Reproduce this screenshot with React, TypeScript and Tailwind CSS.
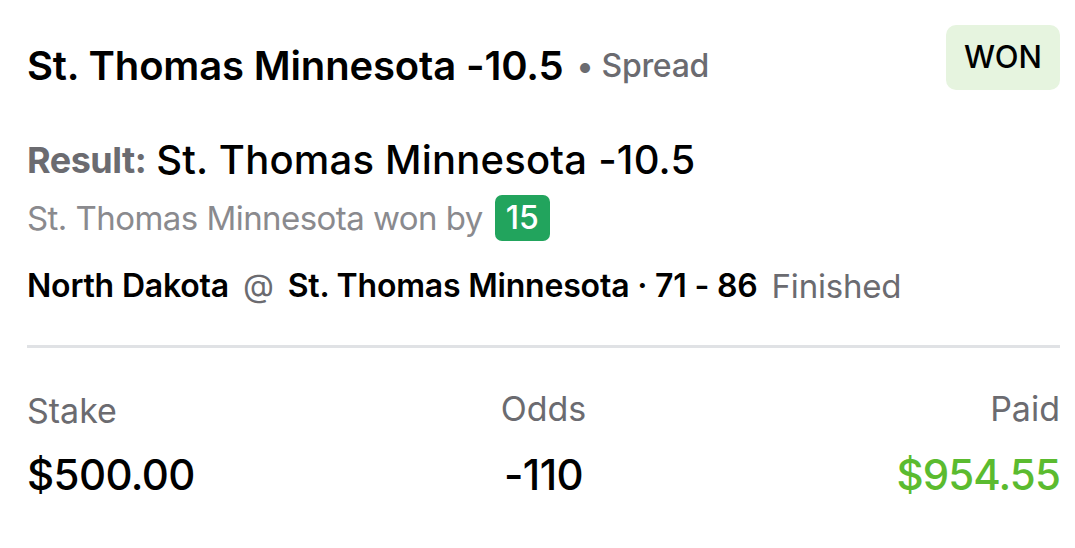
import React from "react";

export default function App() {
  return (
    <div className="w-[1075px] h-[548px] bg-white pl-[27px] pr-[15px] text-black" style={{ fontFamily: "Inter, 'Liberation Sans', sans-serif" }}>
      <div className="flex items-start justify-between pt-[25px]">
        <div className="mt-[21px] flex items-center h-[40px]">
          <span className="text-[40px] leading-[40px] font-semibold tracking-[-0.15px]">St. Thomas Minnesota -10.5</span>
          <span className="ml-[13px] text-[#6b6b70] text-[32px] leading-[40px] font-medium tracking-[-0.3px]">•&nbsp;Spread</span>
        </div>
        <div className="h-[65px] w-[114px] rounded-[10px] bg-[#e6f4df] flex items-center justify-center text-[31px] font-medium">WON</div>
      </div>
      <div className="mt-[50px] flex items-center h-[40px]">
        <span className="text-[#6b6b70] text-[36px] leading-[40px] font-bold tracking-[-0.5px]">Result:</span>
        <span className="ml-[10px] text-[40px] leading-[40px] font-medium tracking-[0.2px]">St. Thomas Minnesota -10.5</span>
      </div>
      <div className="mt-[15px] flex items-center h-[46px]">
        <span className="text-[#8a8a8e] text-[33px] leading-[40px] tracking-[-0.55px]">St. Thomas Minnesota won by</span>
        <span className="ml-[12px] h-[46px] w-[55px] rounded-[7px] bg-[#22a45d] text-white text-[32px] font-medium flex items-center justify-center">15</span>
      </div>
      <div className="mt-[25px] flex items-center h-[40px] text-[32px] leading-[40px] tracking-[-0.2px]">
        <span className="font-semibold">North Dakota</span>
        <span className="ml-[14px] text-[#6b6b70]">@</span>
        <span className="ml-[14px] font-semibold">St. Thomas Minnesota · 71 - 86</span>
        <span className="ml-[14px] text-[#6b6b70] text-[33px]">Finished</span>
      </div>
      <div className="mt-[39px] h-[3px] bg-[#e0e2e5]" />
      <div className="mt-[43px] grid grid-cols-3">
        <div className="flex flex-col items-start">
          <span className="text-[#6b6b70] text-[34px] leading-[40px]">Stake</span>
          <span className="mt-[22px] text-[42px] leading-[44px] font-medium tracking-[-0.6px]">$500.00</span>
        </div>
        <div className="flex flex-col items-center">
          <span className="text-[#6b6b70] text-[34px] leading-[40px] -mt-[2px]">Odds</span>
          <span className="mt-[24px] text-[42px] leading-[44px] font-medium tracking-[-0.6px]">-110</span>
        </div>
        <div className="flex flex-col items-end">
          <span className="text-[#6b6b70] text-[34px] leading-[40px] -mt-[2px]">Paid</span>
          <span className="mt-[24px] text-[42px] leading-[44px] font-medium tracking-[-0.9px] text-[#5bbb2f]">$954.55</span>
        </div>
      </div>
    </div>
  );
}
